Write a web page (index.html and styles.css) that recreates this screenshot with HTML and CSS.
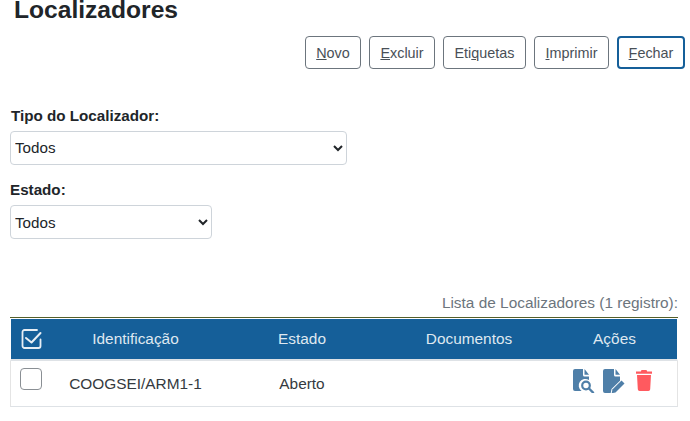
FILE: index.html
```html
<!DOCTYPE html>
<html lang="pt-BR">
<head>
<meta charset="utf-8">
<title>Localizadores</title>
<link rel="stylesheet" href="styles.css">
</head>
<body>
<main class="page">
  <h1 class="title">Localizadores</h1>
  <div class="toolbar">
    <button class="btn"><u>N</u>ovo</button>
    <button class="btn"><u>E</u>xcluir</button>
    <button class="btn">Eti<u>q</u>uetas</button>
    <button class="btn"><u>I</u>mprimir</button>
    <button class="btn btn-focus"><u>F</u>echar</button>
  </div>
  <label class="label label-tipo" for="tipo">Tipo do Localizador:</label>
  <select id="tipo" class="select select-tipo"><option>Todos</option></select>
  <label class="label label-estado" for="estado">Estado:</label>
  <select id="estado" class="select select-estado"><option>Todos</option></select>
  <p class="caption">Lista de Localizadores (1 registro):</p>
  <table class="table">
    <thead>
      <tr>
        <th class="col-check">
          <svg class="check-all" width="22" height="22" viewBox="0 0 22 22" fill="none" stroke="#e8eef4" stroke-width="1.800" stroke-linecap="round" stroke-linejoin="round"><path d="M20.500 11.500v6.500a2 2 0 0 1-2 2H4.500a2 2 0 0 1-2-2V4a2 2 0 0 1 2-2h12.500"/><path d="M6 10l5.500 4.500 9-9.500" stroke-width="2"/></svg>
        </th>
        <th class="col-id">Identificação</th>
        <th class="col-state">Estado</th>
        <th class="col-docs">Documentos</th>
        <th class="col-actions">Ações</th>
      </tr>
    </thead>
    <tbody>
      <tr>
        <td class="cell-check"><span class="box"></span></td>
        <td>COOGSEI/ARM1-1</td>
        <td>Aberto</td>
        <td></td>
        <td class="cell-actions">
          <span class="actions">
            <svg width="22" height="24" viewBox="0 0 22 24"><path fill="#4f7fa8" d="M2 0h8v6a1.500 1.500 0 0 0 1.500 1.500H16v3.600a6.500 6.500 0 0 0-7.400 10.900H2a2 2 0 0 1-2-2V2a2 2 0 0 1 2-2z"/><path fill="#4f7fa8" d="M11.500 0L16 5.800h-4.500z"/><circle cx="13" cy="16.500" r="3.800" fill="none" stroke="#4f7fa8" stroke-width="2.200"/><path d="M16 19.500l4 4" stroke="#4f7fa8" stroke-width="2.400" stroke-linecap="round"/></svg>
            <svg width="22" height="24" viewBox="0 0 22 24"><path fill="#4f7fa8" d="M2 0h9v6a1.500 1.500 0 0 0 1.500 1.500H17v4.300L8.500 20l-.8 4H2a2 2 0 0 1-2-2V2a2 2 0 0 1 2-2z"/><path fill="#4f7fa8" d="M12.500 0L17 5.800h-4.500z"/><path fill="#4f7fa8" d="M18.500 11.500l3 3L12.500 23.500l-3.800.7.700-3.700z"/></svg>
            <svg class="trash" width="16" height="21" viewBox="0 0 16 21"><path fill="#ff5a5f" d="M5.500 0h5l.7 1.500H16v2.200H0V1.500h4.800z"/><path fill="#ff5a5f" d="M1 5h14l-.8 14.300a1.800 1.800 0 0 1-1.800 1.700H3.600a1.800 1.800 0 0 1-1.800-1.700z"/></svg>
          </span>
        </td>
      </tr>
    </tbody>
  </table>
</main>
</body>
</html>
```
FILE: styles.css
```css
* { box-sizing: border-box; }
html, body { margin: 0; padding: 0; background: #fff; }
body { font-family: "Liberation Sans", Arial, sans-serif; color: #212529; overflow: hidden; }
.page { width: 690px; height: 421px; padding: 0 5px 0 10px; }
.title { margin: 0 0 0 4px; font-size: 24.6px; line-height: 20px; font-weight: 700; color: #212529; }
.toolbar { display: flex; justify-content: flex-end; gap: 8px; margin-top: 16px; }
.btn { height: 33px; background: #fff; border: 1px solid #6c757d; border-radius: 4px; padding: 0; font: 14.4px "Liberation Sans", Arial, sans-serif; color: #495057; }
.btn:nth-child(1) { width: 56px; }
.btn:nth-child(2) { width: 66px; }
.btn:nth-child(3) { width: 83px; }
.btn:nth-child(4) { width: 75px; }
.btn-focus { width: 68px; border: 2px solid #155f99; }
.label { display: block; font-size: 15.2px; line-height: 18px; font-weight: 700; color: #212529; }
.label-tipo { margin: 38px 0 0 1px; }
.label-estado { margin-top: 16px; }
.select { display: block; height: 34px; padding: 0; background-color: #fff; border: 1px solid #ced4da; border-radius: 4px; font: 15.2px "Liberation Sans", Arial, sans-serif; color: #212529; }
.select-tipo { width: 337px; margin-top: 6px; padding-bottom: 1px; }
.select-estado { width: 202px; margin-top: 6px; }
.caption { margin: 55px 0 0; width: 668px; text-align: right; font-size: 15.4px; line-height: 18px; color: #6c757d; }
.table { width: 668px; margin-top: 5px; border-collapse: separate; border-spacing: 0; table-layout: fixed; border-top: 1px solid #555f2a; font-size: 15.4px; }
.table th { height: 43px; padding: 0; background: #155f99; color: #dfe8f0; font-weight: 400; font-size: 15.4px; text-align: center; border-top: 1px solid #fff; border-bottom: 2px solid #dee2e6; vertical-align: middle; }
.table th:first-child { border-left: 1px solid #fff; }
.table th:last-child { border-right: 1px solid #fff; padding-right: 1px; }
.col-check { width: 42px; }
.col-id { width: 167px; }
.col-state { width: 166px; }
.col-docs { width: 168px; }
.table td { height: 46px; padding: 0; text-align: center; color: #343a40; border-bottom: 1px solid #dee2e6; vertical-align: middle; font-size: 15.4px; }
.table tbody tr td:first-child { border-left: 1px solid #e4e4e4; }
.table tbody tr td:last-child { border-right: 1px solid #e4e4e4; }
.check-all { display: block; margin: 0 0 0 9px; }
.cell-check { vertical-align: top !important; }
.box { display: block; width: 22px; height: 22px; margin: 7px 0 0 9px; border: 1px solid #8a8f94; border-radius: 4px; background: #fff; }
.cell-actions { vertical-align: top !important; }
.actions { display: flex; justify-content: flex-start; align-items: flex-start; padding: 8px 0 0 20px; }
.actions svg { display: block; margin-right: 8px; }
.actions svg:nth-child(2) { margin-right: 11px; }
.trash { margin-top: 1px; }
```
